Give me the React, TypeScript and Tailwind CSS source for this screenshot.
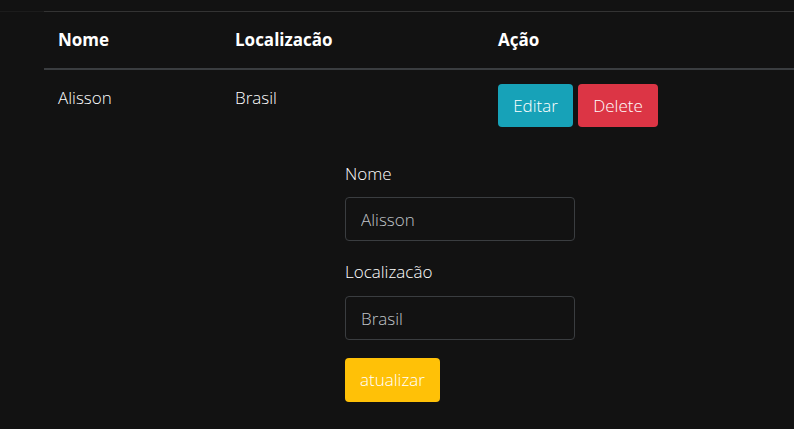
import { useState } from 'react'

type Item = { nome: string; local: string }

export default function App() {
  const [items] = useState<Item[]>([{ nome: 'Alisson', local: 'Brasil' }])
  const [nome, setNome] = useState('Alisson')
  const [local, setLocal] = useState('Brasil')

  return (
    <div
      className="min-h-screen w-full bg-[#121212] text-white overflow-hidden"
      style={{ fontFamily: '"Open Sans", "Noto Sans", sans-serif' }}
    >
      <div className="h-[11px]" />
      <div className="flex">
        <div className="w-[44px] shrink-0 border-t border-[#1c1c1c]" />
        <table className="w-[800px] shrink-0 border-collapse text-left text-[17px]">
          <thead>
            <tr className="border-t border-[#333333] border-b-2 border-b-[#3a3d40]">
              <th className="w-[177px] pl-[14px] pt-[16px] pb-[16px] font-bold leading-6">Nome</th>
              <th className="w-[263px] pl-[14px] pt-[16px] pb-[16px] font-bold leading-6">Localizacão</th>
              <th className="pl-[14px] pt-[16px] pb-[16px] font-bold leading-6">Ação</th>
            </tr>
          </thead>
          <tbody>
            {items.map((item) => (
              <tr key={item.nome}>
                <td className="align-top pl-[14px] pt-[16px] font-light leading-6">{item.nome}</td>
                <td className="align-top pl-[14px] pt-[16px] font-light leading-6">{item.local}</td>
                <td className="align-top pl-[14px] pt-[14px]">
                  <div className="flex gap-[5px]">
                    <button className="h-[43px] w-[75px] rounded-[4px] bg-[#17a2b8] text-[17px] font-light text-white">
                      Editar
                    </button>
                    <button className="h-[43px] w-[80px] rounded-[4px] bg-[#dc3545] text-[17px] font-light text-white">
                      Delete
                    </button>
                  </div>
                </td>
              </tr>
            ))}
          </tbody>
        </table>
      </div>

      <form className="ml-[345px] mt-[35px] w-[230px]" onSubmit={(e) => e.preventDefault()}>
        <label className="block text-[17px] font-light leading-6">Nome</label>
        <input
          className="mt-[11px] block h-[44px] w-[230px] rounded-[4px] border border-[#3a3d40] bg-transparent px-[15px] text-[17px] font-light text-[#c0c4c8] outline-none"
          value={nome}
          onChange={(e) => setNome(e.target.value)}
        />
        <label className="mt-[19px] block text-[17px] font-light leading-6">Localizacão</label>
        <input
          className="mt-[12px] block h-[44px] w-[230px] rounded-[4px] border border-[#3a3d40] bg-transparent px-[15px] text-[17px] font-light text-[#c0c4c8] outline-none"
          value={local}
          onChange={(e) => setLocal(e.target.value)}
        />
        <button className="mt-[18px] h-[44px] w-[95px] rounded-[4px] bg-[#ffc107] text-[17px] font-light text-white">
          atualizar
        </button>
      </form>
    </div>
  )
}
